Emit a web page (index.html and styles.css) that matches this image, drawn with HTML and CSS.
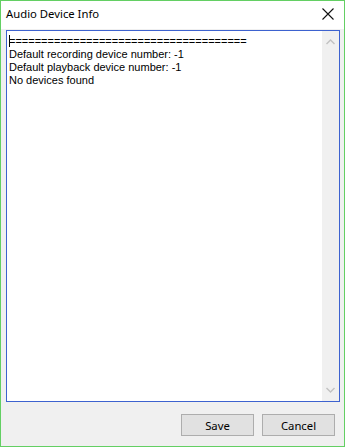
FILE: index.html
```html
<!DOCTYPE html>
<html>
<head>
<meta charset="utf-8">
<link rel="stylesheet" href="styles.css">
</head>
<body>
<div class="window">
  <div class="titlebar">
    <span class="title">Audio Device Info</span>
    <svg class="close" width="12" height="12" viewBox="0 0 12 12"><path d="M0.5 0.5 L11.5 11.5 M11.5 0.5 L0.5 11.5" stroke="#111" stroke-width="1.1" fill="none"/></svg>
  </div>
  <div class="body">
    <div class="textbox">
      <div class="text"><div class="line"><span class="caret"></span>=====================================</div><div class="line">Default recording device number: -1</div><div class="line">Default playback device number: -1</div><div class="line">No devices found</div></div>
      <div class="scrollbar">
        <svg class="arrow" width="9" height="6" viewBox="0 0 9 6"><path d="M0.5 5 L4.5 1 L8.5 5" stroke="#c2c2c2" stroke-width="1.4" fill="none"/></svg>
        <svg class="arrow" width="9" height="6" viewBox="0 0 9 6"><path d="M0.5 1 L4.5 5 L8.5 1" stroke="#c2c2c2" stroke-width="1.4" fill="none"/></svg>
      </div>
    </div>
    <div class="buttons">
      <button class="btn">Save</button>
      <button class="btn">Cancel</button>
    </div>
  </div>
</div>
</body>
</html>
```
FILE: styles.css
```css
html, body {
  margin: 0;
  padding: 0;
  background: #ffffff;
}
.window {
  width: 343px;
  height: 445px;
  border: 1px solid #63cf63;
  background: #f0f0f0;
  display: flex;
  flex-direction: column;
}
.titlebar {
  height: 28px;
  background: #ffffff;
  display: flex;
  align-items: center;
  justify-content: space-between;
  padding: 0 10px 0 5px;
  box-sizing: border-box;
  flex: none;
}
.title {
  font-family: "Noto Sans", "Open Sans", sans-serif;
  font-size: 11.3px;
  color: #000;
  margin-top: -3px;
}
.close {
  margin-top: -2px;
}
.body {
  flex: 1;
  display: flex;
  flex-direction: column;
  padding: 1px 4px 10px 5px;
}
.textbox {
  height: 370px;
  border: 1px solid #3d62cf;
  background: #fff;
  display: flex;
  flex: none;
}
.text {
  flex: 1;
  padding: 4px 0 0 2px;
  font-family: "Liberation Sans", Arial, sans-serif;
  font-size: 11px;
  line-height: 13px;
  color: #000;
}
.line {
  white-space: pre;
}
.caret {
  display: inline-block;
  width: 1px;
  height: 12px;
  background: #000;
  margin-right: -1px;
  vertical-align: -2px;
}
.scrollbar {
  width: 17px;
  background: #f0f0f0;
  display: flex;
  flex-direction: column;
  justify-content: space-between;
  align-items: center;
  padding: 8px 0 8px;
}
.arrow {
  display: block;
}
.buttons {
  margin-top: auto;
  display: flex;
  justify-content: flex-end;
  gap: 8px;
  padding-right: 5px;
}
.btn {
  width: 73px;
  height: 22px;
  margin: 0;
  padding: 0;
  border: 1px solid #adadad;
  background: #e1e1e1;
  font-family: "Noto Sans", "Open Sans", sans-serif;
  font-size: 11.3px;
  color: #000;
}
```
